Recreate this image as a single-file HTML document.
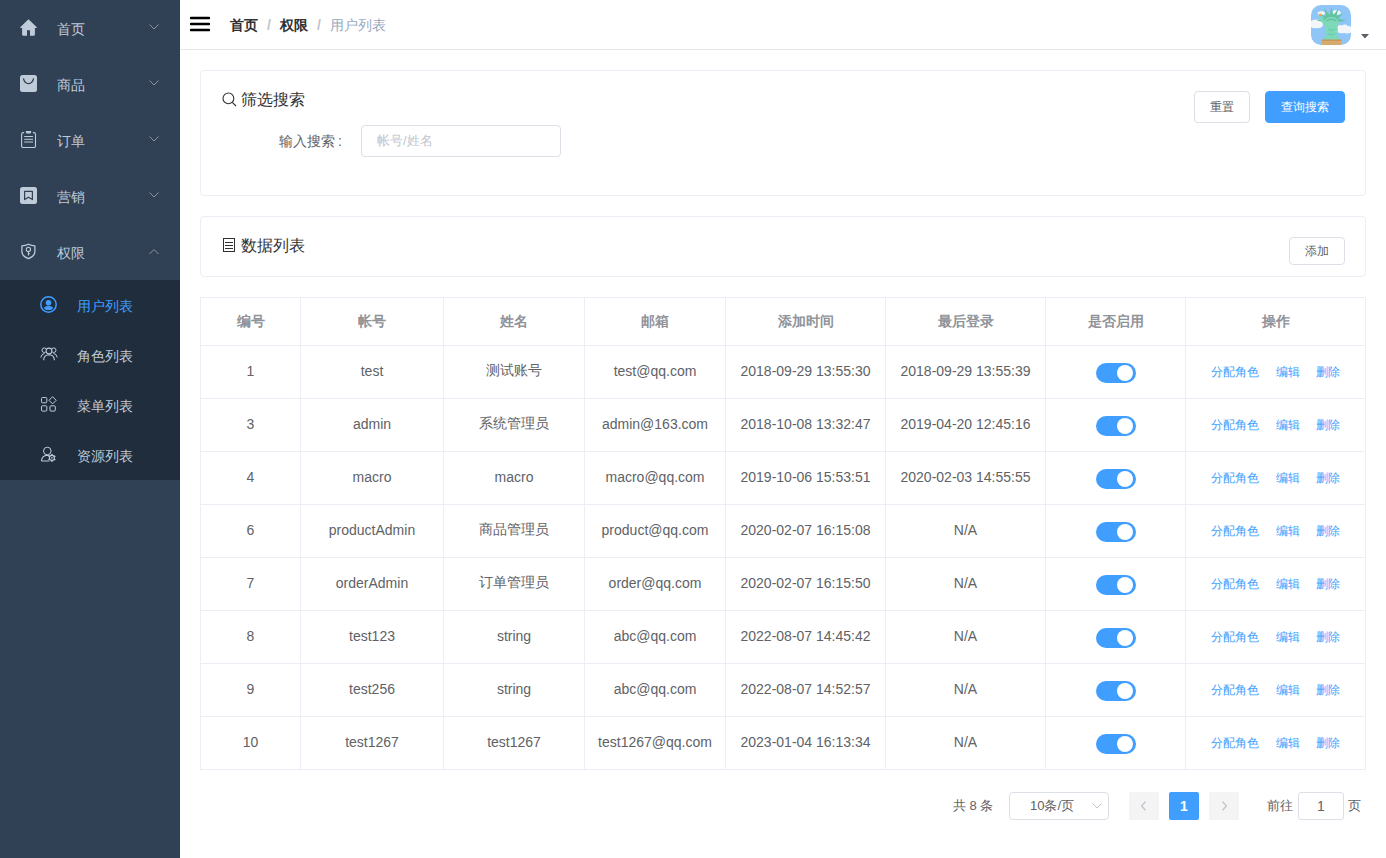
<!DOCTYPE html>
<html><head><meta charset="utf-8">
<style>
*{box-sizing:border-box;margin:0;padding:0}
html,body{width:1386px;height:858px;overflow:hidden;background:#fff;font-family:"Liberation Sans",sans-serif;font-size:14px;color:#606266}
.abs{position:absolute}
#side{position:absolute;left:0;top:0;width:180px;height:858px;background:#304156}
.mi{position:absolute;left:0;width:180px;height:56px;color:#bfcbd9;font-size:14px}
.mi .t{position:absolute;left:57px;top:1px;line-height:56px}
.mi svg{position:absolute}
.arr{position:absolute;left:149px;width:10px;height:6px}
.sub{position:absolute;left:0;top:280px;width:180px;height:200px;background:#1f2d3d}
.si{position:absolute;left:0;width:180px;height:50px;color:#bfcbd9}
.si .t{position:absolute;left:77px;top:1px;line-height:50px}
.si svg{position:absolute}
#nav{position:absolute;left:180px;top:0;width:1206px;height:50px;border-bottom:1px solid #e6e6e6;background:#fff}
.card{position:absolute;left:200px;width:1166px;border:1px solid #ebeef5;border-radius:4px;background:#fff}
.btn{position:absolute;height:32px;border:1px solid #dcdfe6;border-radius:4px;font-size:12px;line-height:30px;text-align:center;color:#606266;background:#fff}
.btnp{background:#409eff;border-color:#409eff;color:#fff}
table{position:absolute;left:200px;top:297px;width:1166px;border-collapse:collapse;table-layout:fixed}
td,th{border:1px solid #ebeef5;text-align:center;font-size:14px;padding:0}
th{height:48px;color:#909399;font-weight:bold}
td{height:53px;color:#606266;padding-bottom:2px}
.sw{display:inline-block;position:relative;width:40px;height:20px;border-radius:10px;background:#409eff;vertical-align:middle;top:2px}
.sw i{position:absolute;left:21px;top:2px;width:16px;height:16px;border-radius:50%;background:#fff}
.op{font-size:12px;color:#409eff;position:relative;top:1px}
.pg{position:absolute;top:792px;height:28px;line-height:28px;font-size:13px;color:#606266}
</style></head><body>
<div id="side">
  <div class="mi" style="top:0">
    <svg style="left:20px;top:19px" width="17" height="17" viewBox="0 0 17 17"><path d="M8.5 0.3 L0.2 8.2 Q0 8.8 0.6 8.9 L2.1 8.9 L2.1 15.5 Q2.2 16.8 3.4 16.8 L7 16.8 L7 11.3 L10 11.3 L10 16.8 L13.6 16.8 Q14.8 16.8 14.9 15.5 L14.9 8.9 L16.4 8.9 Q17 8.8 16.8 8.2 Z" fill="#bfcbd9"/></svg>
    <span class="t">首页</span>
    <svg class="arr" style="top:24px" viewBox="0 0 10 6"><path d="M0.5 0.5 L5 5 L9.5 0.5" fill="none" stroke="#909399" stroke-width="1"/></svg>
  </div>
  <div class="mi" style="top:56px">
    <svg style="left:20px;top:19px" width="17" height="17" viewBox="0 0 17 17"><rect x="0" y="0" width="17" height="17" rx="2.5" fill="#bfcbd9"/><path d="M3.4 3.4 Q4.5 8.6 8.5 8.6 Q12.5 8.6 13.6 3.4" fill="none" stroke="#304156" stroke-width="1.3"/></svg>
    <span class="t">商品</span>
    <svg class="arr" style="top:24px" viewBox="0 0 10 6"><path d="M0.5 0.5 L5 5 L9.5 0.5" fill="none" stroke="#909399" stroke-width="1"/></svg>
  </div>
  <div class="mi" style="top:112px">
    <svg style="left:20px;top:19px" width="17" height="17" viewBox="0 0 17 17"><path d="M4.2 1.6 L3.4 1.6 Q1.6 1.6 1.6 3.4 L1.6 14.9 Q1.6 16.6 3.4 16.6 L13.8 16.6 Q15.5 16.6 15.5 14.9 L15.5 3.4 Q15.5 1.6 13.8 1.6 L12.9 1.6" fill="none" stroke="#bfcbd9" stroke-width="1.1"/><path d="M5.6 0 L11.4 0 L10.6 2.4 L6.4 2.4 Z" fill="#bfcbd9"/><path d="M4.2 5.5 H13 M4.2 8.3 H13 M4.2 11 H13" stroke="#bfcbd9" stroke-width="1"/></svg>
    <span class="t">订单</span>
    <svg class="arr" style="top:24px" viewBox="0 0 10 6"><path d="M0.5 0.5 L5 5 L9.5 0.5" fill="none" stroke="#909399" stroke-width="1"/></svg>
  </div>
  <div class="mi" style="top:168px">
    <svg style="left:20px;top:19px" width="17" height="17" viewBox="0 0 17 17"><rect x="0" y="0" width="17" height="17" rx="2.5" fill="#bfcbd9"/><path d="M4.6 4.4 L12.4 4.4 L12.4 12.6 L8.5 10.2 L4.6 12.6 Z" fill="none" stroke="#304156" stroke-width="1.2" stroke-linejoin="round"/></svg>
    <span class="t">营销</span>
    <svg class="arr" style="top:24px" viewBox="0 0 10 6"><path d="M0.5 0.5 L5 5 L9.5 0.5" fill="none" stroke="#909399" stroke-width="1"/></svg>
  </div>
  <div class="mi" style="top:224px">
    <svg style="left:20px;top:19px" width="17" height="17" viewBox="0 0 17 17"><path d="M8.4 1.2 Q5.2 2.6 1.9 2.9 L1.9 8.6 Q1.9 13.2 8.4 15.6 Q14.9 13.2 14.9 8.6 L14.9 2.9 Q11.6 2.6 8.4 1.2 Z" fill="none" stroke="#bfcbd9" stroke-width="1.25" stroke-linejoin="round"/><circle cx="8.4" cy="6.4" r="2.1" fill="none" stroke="#bfcbd9" stroke-width="1.1"/><path d="M8.4 8.5 L8.4 12.6 M8.4 10.6 L9.8 10.6" stroke="#bfcbd9" stroke-width="1.1"/></svg>
    <span class="t">权限</span>
    <svg class="arr" style="top:25px" viewBox="0 0 10 6"><path d="M0.5 5 L5 0.5 L9.5 5" fill="none" stroke="#909399" stroke-width="1"/></svg>
  </div>
  <div class="sub">
    <div class="si" style="top:0;color:#409eff">
      <svg style="left:40px;top:16px" width="17" height="17" viewBox="0 0 17 17"><circle cx="8.5" cy="8.5" r="7.7" fill="none" stroke="#409eff" stroke-width="1.5"/><circle cx="8.5" cy="6.8" r="2.8" fill="#409eff"/><ellipse cx="8.5" cy="12" rx="4.3" ry="2" fill="#409eff"/></svg>
      <span class="t">用户列表</span></div>
    <div class="si" style="top:50px">
      <svg style="left:40px;top:16px" width="18" height="16" viewBox="0 0 18 16"><circle cx="4.3" cy="4.2" r="2.3" fill="none" stroke="#bfcbd9" stroke-width="1"/><circle cx="13.7" cy="4.2" r="2.3" fill="none" stroke="#bfcbd9" stroke-width="1"/><circle cx="9" cy="5" r="3.6" fill="#1f2d3d"/><circle cx="9" cy="5" r="2.9" fill="none" stroke="#bfcbd9" stroke-width="1.1"/><path d="M0.8 11.5 Q1.3 7.8 4.6 7.3" fill="none" stroke="#bfcbd9" stroke-width="1"/><path d="M17.2 11.5 Q16.7 7.8 13.4 7.3" fill="none" stroke="#bfcbd9" stroke-width="1"/><path d="M3.6 14.2 Q3.8 9 9 8.8 Q14.2 9 14.4 14.2" fill="none" stroke="#bfcbd9" stroke-width="1.1"/></svg>
      <span class="t">角色列表</span></div>
    <div class="si" style="top:100px">
      <svg style="left:40px;top:16px" width="17" height="17" viewBox="0 0 17 17"><rect x="1.5" y="1.5" width="5.3" height="5.3" rx="1" fill="none" stroke="#bfcbd9" stroke-width="1"/><rect x="1.5" y="9.8" width="5.3" height="5.3" rx="1" fill="none" stroke="#bfcbd9" stroke-width="1"/><rect x="10" y="9.8" width="5.3" height="5.3" rx="1" fill="none" stroke="#bfcbd9" stroke-width="1"/><path d="M12.6 0.7 L16.2 4.3 L12.6 7.9 L9 4.3 Z" fill="none" stroke="#bfcbd9" stroke-width="1" stroke-linejoin="round"/></svg>
      <span class="t">菜单列表</span></div>
    <div class="si" style="top:150px">
      <svg style="left:40px;top:16px" width="17" height="17" viewBox="0 0 17 17"><circle cx="7.3" cy="5" r="3.8" fill="none" stroke="#bfcbd9" stroke-width="1"/><path d="M1.5 15 Q1.8 9.5 7.3 9.3 Q8.8 9.3 10 9.8 M1.5 15 L9.5 15" fill="none" stroke="#bfcbd9" stroke-width="1.1"/><circle cx="11.9" cy="11.9" r="3.7" fill="#1f2d3d"/><circle cx="11.9" cy="11.9" r="2.5" fill="none" stroke="#bfcbd9" stroke-width="1.1"/><rect x="11.10" y="8.00" width="1.6" height="1.6" fill="#bfcbd9" transform="rotate(0 11.9 11.9)"/><rect x="11.10" y="8.00" width="1.6" height="1.6" fill="#bfcbd9" transform="rotate(60 11.9 11.9)"/><rect x="11.10" y="8.00" width="1.6" height="1.6" fill="#bfcbd9" transform="rotate(120 11.9 11.9)"/><rect x="11.10" y="8.00" width="1.6" height="1.6" fill="#bfcbd9" transform="rotate(180 11.9 11.9)"/><rect x="11.10" y="8.00" width="1.6" height="1.6" fill="#bfcbd9" transform="rotate(240 11.9 11.9)"/><rect x="11.10" y="8.00" width="1.6" height="1.6" fill="#bfcbd9" transform="rotate(300 11.9 11.9)"/><circle cx="11.9" cy="11.9" r="0.8" fill="#bfcbd9"/></svg>
      <span class="t">资源列表</span></div>
  </div>
</div>

<div id="nav">
  <svg class="abs" style="left:10px;top:16px" width="20" height="16" viewBox="0 0 20 16"><path d="M1 2 H19 M1 8 H19 M1 14 H19" stroke="#000" stroke-width="2.6" stroke-linecap="round"/></svg>
  <div class="abs" style="left:50px;top:17px;line-height:16px;font-size:14px;white-space:nowrap">
    <span style="font-weight:bold;color:#303133">首页</span><span style="color:#c0c4cc;margin:0 9px;font-weight:bold">/</span><span style="font-weight:bold;color:#303133">权限</span><span style="color:#c0c4cc;margin:0 9px;font-weight:bold">/</span><span style="color:#97a8be">用户列表</span>
  </div>
  <svg class="abs" style="left:1131px;top:5px" width="40" height="40" viewBox="0 0 40 40">
    <defs><clipPath id="av"><rect width="40" height="40" rx="10"/></clipPath></defs>
    <g clip-path="url(#av)">
      <rect width="40" height="40" fill="#90c5f8"/>
      <path d="M0 16 Q3 13.5 6 15 Q9 13.5 11.5 16.5 Q13 19 11 22 Q8 24 4 23 Q1 23.5 0 22 Z" fill="#f3f6f9"/>
      <path d="M26 22 Q28 19 31 20.5 Q34 18.5 37 21 Q40 21 40 22 L40 27.5 Q37 29 33 28 Q29 29 26.5 27 Q25 25 26 22 Z" fill="#f3f6f9"/>
      <path d="M6.5 8 Q8 5.8 10.5 6.5 Q13.5 5.8 14.3 8.5 Q13 10.5 10 10.2 Q7 10.5 6.5 8 Z" fill="#f3f6f9"/>
      <path d="M21 7 Q23 4.5 26 5.5 Q29.5 5 30 8 Q29 10 26 9.6 Q22 10 21 7 Z" fill="#f3f6f9"/>
      <path d="M20.4 1.7 L22.3 10 L27.7 3.5 L25.3 11 L32.6 8.4 L27 13.5 L35.3 15.4 L27.5 17 L13 17 L5.5 15.4 L13.5 13 L8 8.5 L15 11 L13.1 3.2 L18.5 10 Z" fill="#62c4a1"/>
      <ellipse cx="20.4" cy="18" rx="7.2" ry="6.2" fill="#7dd9b9"/>
      <path d="M15.5 16 Q20.4 12.5 25.3 16" fill="none" stroke="#4fa98a" stroke-width="0.8"/>
      <path d="M8 13 L11 12 L16 19 L14 22 Z" fill="#7dd9b9"/>
      <rect x="7.8" y="11" width="3" height="2.5" fill="#7dd9b9"/>
      <circle cx="9.3" cy="9.8" r="1.3" fill="#f2a441"/>
      <path d="M14.5 21 L26.5 21 Q27.5 27 25.5 30 L28.5 33.5 L28.5 35 L12.5 35 L12.5 33.5 L15.5 30 Q13.5 27 14.5 21 Z" fill="#7dd9b9"/>
      <path d="M17 24 Q20 27 24 24 M17 29 Q20.5 31 24 29" fill="none" stroke="#5fbf9c" stroke-width="0.7"/>
      <rect x="10.8" y="34.7" width="19.5" height="6" fill="#d8a96d"/>
      <rect x="10.8" y="34.7" width="19.5" height="0.8" fill="#b88a50"/>
    </g>
  </svg>
  <svg class="abs" style="left:1181px;top:34px" width="8" height="5" viewBox="0 0 8 5"><path d="M0 0 H8 L4 4.6 Z" fill="#5a5e66"/></svg>
</div>

<div class="card" style="top:70px;height:126px">
  <svg class="abs" style="left:21px;top:21px" width="15" height="15" viewBox="0 0 15 15"><circle cx="6.4" cy="6.4" r="5.4" fill="none" stroke="#303133" stroke-width="1.1"/><path d="M10.3 10.3 L14 14" stroke="#303133" stroke-width="1.1"/></svg>
  <div class="abs" style="left:40px;top:18px;font-size:16px;line-height:22px;color:#303133">筛选搜索</div>
  <div class="btn" style="left:993px;top:20px;width:56px">重置</div>
  <div class="btn btnp" style="left:1064px;top:20px;width:80px">查询搜索</div>
  <div class="abs" style="left:78px;top:62px;line-height:16px;color:#606266">输入搜索<span style="position:relative;left:3px">:</span></div>
  <div class="abs" style="left:160px;top:54px;width:200px;height:32px;border:1px solid #dcdfe6;border-radius:4px;font-size:13px;line-height:30px;padding-left:15px;color:#c0c4cc">帐号/姓名</div>
</div>

<div class="card" style="top:216px;height:61px">
  <svg class="abs" style="left:22px;top:21px" width="12" height="14" viewBox="0 0 12 14"><rect x="0.5" y="0.5" width="11" height="13" fill="none" stroke="#303133" stroke-width="1"/><path d="M2 4.5 H10 M2 7.5 H10 M2 10.5 H10" stroke="#303133" stroke-width="1"/></svg>
  <div class="abs" style="left:40px;top:18px;font-size:16px;line-height:22px;color:#303133">数据列表</div>
  <div class="btn" style="left:1088px;top:20px;width:56px;height:28px;line-height:26px">添加</div>
</div>

<table>
<colgroup><col style="width:100px"><col style="width:143px"><col style="width:141px"><col style="width:141px"><col style="width:160px"><col style="width:160px"><col style="width:140px"><col></colgroup>
<tr><th>编号</th><th>帐号</th><th>姓名</th><th>邮箱</th><th>添加时间</th><th>最后登录</th><th>是否启用</th><th>操作</th></tr>
<tr><td>1</td><td>test</td><td>测试账号</td><td>test@qq.com</td><td>2018-09-29 13:55:30</td><td>2018-09-29 13:55:39</td><td><span class="sw"><i></i></span></td><td><span class="op">分配角色</span><span class="op" style="margin-left:17px">编辑</span><span class="op" style="margin-left:16px">删除</span></td></tr>
<tr><td>3</td><td>admin</td><td>系统管理员</td><td>admin@163.com</td><td>2018-10-08 13:32:47</td><td>2019-04-20 12:45:16</td><td><span class="sw"><i></i></span></td><td><span class="op">分配角色</span><span class="op" style="margin-left:17px">编辑</span><span class="op" style="margin-left:16px">删除</span></td></tr>
<tr><td>4</td><td>macro</td><td>macro</td><td>macro@qq.com</td><td>2019-10-06 15:53:51</td><td>2020-02-03 14:55:55</td><td><span class="sw"><i></i></span></td><td><span class="op">分配角色</span><span class="op" style="margin-left:17px">编辑</span><span class="op" style="margin-left:16px">删除</span></td></tr>
<tr><td>6</td><td>productAdmin</td><td>商品管理员</td><td>product@qq.com</td><td>2020-02-07 16:15:08</td><td>N/A</td><td><span class="sw"><i></i></span></td><td><span class="op">分配角色</span><span class="op" style="margin-left:17px">编辑</span><span class="op" style="margin-left:16px">删除</span></td></tr>
<tr><td>7</td><td>orderAdmin</td><td>订单管理员</td><td>order@qq.com</td><td>2020-02-07 16:15:50</td><td>N/A</td><td><span class="sw"><i></i></span></td><td><span class="op">分配角色</span><span class="op" style="margin-left:17px">编辑</span><span class="op" style="margin-left:16px">删除</span></td></tr>
<tr><td>8</td><td>test123</td><td>string</td><td>abc@qq.com</td><td>2022-08-07 14:45:42</td><td>N/A</td><td><span class="sw"><i></i></span></td><td><span class="op">分配角色</span><span class="op" style="margin-left:17px">编辑</span><span class="op" style="margin-left:16px">删除</span></td></tr>
<tr><td>9</td><td>test256</td><td>string</td><td>abc@qq.com</td><td>2022-08-07 14:52:57</td><td>N/A</td><td><span class="sw"><i></i></span></td><td><span class="op">分配角色</span><span class="op" style="margin-left:17px">编辑</span><span class="op" style="margin-left:16px">删除</span></td></tr>
<tr><td>10</td><td>test1267</td><td>test1267</td><td>test1267@qq.com</td><td>2023-01-04 16:13:34</td><td>N/A</td><td><span class="sw"><i></i></span></td><td><span class="op">分配角色</span><span class="op" style="margin-left:17px">编辑</span><span class="op" style="margin-left:16px">删除</span></td></tr>
</table>

<div class="pg" style="left:953px">共 8 条</div>
<div class="pg" style="left:1009px;width:100px;border:1px solid #dcdfe6;border-radius:4px;line-height:26px;padding-left:20px">10条/页
  <svg class="abs" style="left:82px;top:10px" width="10" height="6" viewBox="0 0 10 6"><path d="M0.5 0.5 L5 5 L9.5 0.5" fill="none" stroke="#c0c4cc" stroke-width="1"/></svg></div>
<div class="pg" style="left:1129px;width:30px;background:#f4f4f5;border-radius:2px">
  <svg class="abs" style="left:11px;top:9px" width="7" height="10" viewBox="0 0 7 10"><path d="M5.5 0.8 L1.5 5 L5.5 9.2" fill="none" stroke="#c0c4cc" stroke-width="1.3"/></svg></div>
<div class="pg" style="left:1169px;width:30px;background:#409eff;border-radius:2px;color:#fff;text-align:center;font-weight:bold;font-size:14px">1</div>
<div class="pg" style="left:1209px;width:30px;background:#f4f4f5;border-radius:2px">
  <svg class="abs" style="left:12px;top:9px" width="7" height="10" viewBox="0 0 7 10"><path d="M1.5 0.8 L5.5 5 L1.5 9.2" fill="none" stroke="#c0c4cc" stroke-width="1.3"/></svg></div>
<div class="pg" style="left:1267px">前往</div>
<div class="pg" style="left:1298px;width:46px;border:1px solid #dcdfe6;border-radius:3px;text-align:center;line-height:26px;font-size:14px">1</div>
<div class="pg" style="left:1348px">页</div>
</body></html>
